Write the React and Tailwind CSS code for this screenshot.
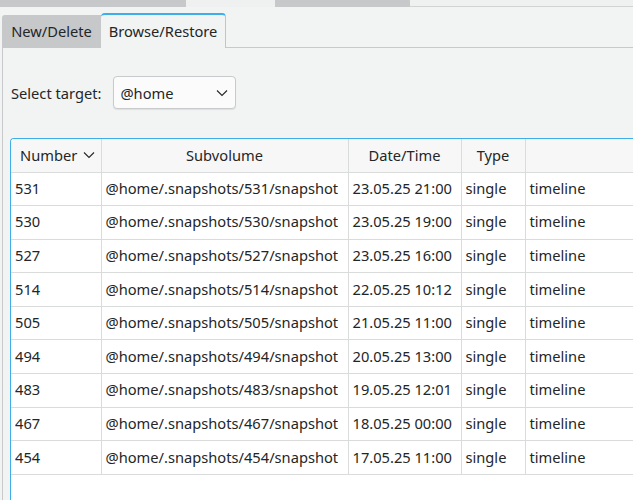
import React from "react";

const rows = [
  ["531", "23.05.25 21:00"],
  ["530", "23.05.25 19:00"],
  ["527", "23.05.25 16:00"],
  ["514", "22.05.25 10:12"],
  ["505", "21.05.25 11:00"],
  ["494", "20.05.25 13:00"],
  ["483", "19.05.25 12:01"],
  ["467", "18.05.25 00:00"],
  ["454", "17.05.25 11:00"],
];

function Chevron({ className }) {
  return (
    <svg className={className} width="12" height="8" viewBox="0 0 12 8" fill="none">
      <path d="M1 1.5 L6 6.5 L11 1.5" stroke="#232627" strokeWidth="1.1" />
    </svg>
  );
}

export default function App() {
  return (
    <div
      className="w-[633px] h-[500px] overflow-hidden bg-[#f2f3f3] text-[#232627] text-[14.67px] flex flex-col"
      style={{ fontFamily: '"Noto Sans", "Open Sans", sans-serif' }}
    >
      {/* top strip */}
      <div className="flex h-[7px] shrink-0">
        <div className="w-[186px] bg-[#c7c8c9]" />
        <div className="w-[89px] bg-[#eff0f0]" />
        <div className="w-[135px] bg-[#c7c8c9]" />
        <div className="flex-1 bg-[#eff0f0] border-b border-[#d2d3d3]" />
      </div>

      {/* tab bar */}
      <div className="flex items-end h-[41px] shrink-0 pl-[2px]">
        <div className="w-[99px] h-[33px] bg-[#c7c8c9] rounded-tl-[3px] flex items-center justify-center border-b border-[#c7c8c9]">
          New/Delete
        </div>
        <div className="w-[125px] h-[35px] bg-[#f2f3f3] rounded-t-[4px] border-t-2 border-[#3daee9] border-r border-r-[#c3c4c5] flex items-center justify-center pb-[1px]">
          Browse/Restore
        </div>
        <div className="flex-1 h-[35px] border-b border-[#c8c9ca]" />
      </div>

      {/* pane */}
      <div className="flex-1 border-l border-[#c8c9ca] ml-[2px] pl-[7px] flex flex-col">
        <div className="flex items-center h-[33px] mt-[28px]">
          <span className="mr-[12px] ml-[1px]">Select target:</span>
          <div className="w-[123px] h-[33px] rounded-[4px] border border-[#c9cacb] bg-[#fbfbfb] shadow-[0_1px_1px_rgba(0,0,0,0.08)] flex items-center justify-between pl-[6px] pr-[7px]">
            <span>@home</span>
            <Chevron />
          </div>
        </div>

        <div className="mt-[29px] flex-1 bg-white border border-[#3daee9] border-r-0 border-b-0 rounded-tl-[4px] overflow-hidden">
          <table className="border-collapse w-[640px]" style={{ tableLayout: "fixed" }}>
            <colgroup>
              <col style={{ width: 90 }} />
              <col style={{ width: 247 }} />
              <col style={{ width: 113 }} />
              <col style={{ width: 64 }} />
              <col style={{ width: 126 }} />
            </colgroup>
            <thead>
              <tr className="h-[33px] bg-[#f7f7f7]">
                <th className="font-normal border-r border-b border-[#dadbdb] text-left pl-[9px]">
                  <div className="flex items-center gap-[6px]">
                    <span>Number</span>
                    <Chevron />
                  </div>
                </th>
                <th className="font-normal border-r border-b border-[#dadbdb] text-center">Subvolume</th>
                <th className="font-normal border-r border-b border-[#dadbdb] text-center">Date/Time</th>
                <th className="font-normal border-r border-b border-[#dadbdb] text-center">Type</th>
                <th className="font-normal border-b border-[#dadbdb]"></th>
              </tr>
            </thead>
            <tbody>
              {rows.map(([n, d]) => (
                <tr key={n} className="h-[33.6px]">
                  <td className="border-r border-b border-[#dadbdb] pl-[4px] pb-[2px]">{n}</td>
                  <td className="border-r border-b border-[#dadbdb] pl-[4px] pb-[2px] whitespace-nowrap">
                    @home/.snapshots/{n}/snapshot
                  </td>
                  <td className="border-r border-b border-[#dadbdb] pl-[4px] pb-[2px] whitespace-nowrap">{d}</td>
                  <td className="border-r border-b border-[#dadbdb] pl-[4px] pb-[2px]">single</td>
                  <td className="border-b border-[#dadbdb] pl-[4px] pb-[2px]">timeline</td>
                </tr>
              ))}
            </tbody>
          </table>
        </div>
      </div>
    </div>
  );
}
